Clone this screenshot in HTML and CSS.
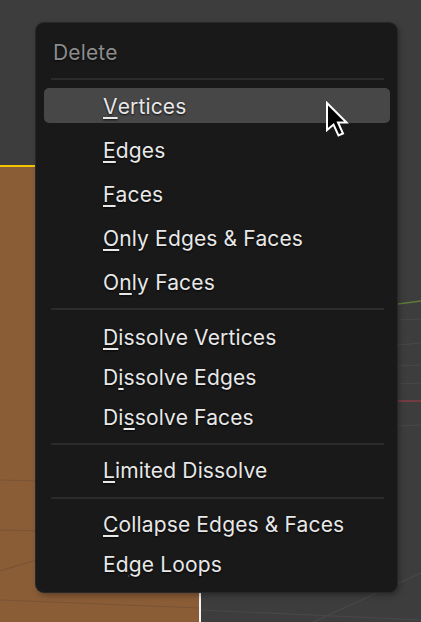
FILE: index.html
```html
<!DOCTYPE html>
<html>
<head>
<meta charset="utf-8">
<link rel="stylesheet" href="styles.css">
</head>
<body>
<div class="viewport">
  <svg class="scene" width="421" height="622" viewBox="0 0 421 622">
    <rect x="0" y="0" width="421" height="622" fill="#3d3d3d"/>
    <rect x="0" y="167" width="200" height="455" fill="#8a5d37"/>
    <rect x="0" y="165" width="40" height="2" fill="#f2c700"/>
    <g stroke="#7a5434" stroke-width="1.2" fill="none">
      <line x1="0" y1="480" x2="40" y2="481"/>
      <line x1="0" y1="530" x2="40" y2="531"/>
      <line x1="0" y1="571" x2="40" y2="559"/>
      <line x1="0" y1="600" x2="200" y2="608"/>
    </g>
    <g stroke="#484848" stroke-width="1.2" fill="none">
      <line x1="201" y1="610" x2="421" y2="620"/>
      <line x1="313" y1="622" x2="421" y2="573"/>
      <line x1="398" y1="320" x2="421" y2="319"/>
      <line x1="398" y1="345" x2="421" y2="343"/>
      <line x1="398" y1="366" x2="421" y2="365"/>
      <line x1="398" y1="384" x2="421" y2="383"/>
      <line x1="398" y1="426" x2="421" y2="425"/>
    </g>
    <line x1="398" y1="304" x2="421" y2="301" stroke="#5d7a3a" stroke-width="1.5"/>
    <line x1="398" y1="401" x2="421" y2="401" stroke="#8a3a45" stroke-width="1.5"/>
    <rect x="199" y="585" width="2" height="37" fill="#f4f4f4"/>
  </svg>

  <div class="menu">
    <div class="title">Delete</div>
    <div class="sep sep-a"></div>
    <div class="group group-wide">
      <div class="item active"><span class="k">V</span>ertices</div>
      <div class="item"><span class="k">E</span>dges</div>
      <div class="item"><span class="k">F</span>aces</div>
      <div class="item"><span class="k">O</span>nly Edges &amp; Faces</div>
      <div class="item">O<span class="k">n</span>ly Faces</div>
    </div>
    <div class="sep sep-b"></div>
    <div class="group">
      <div class="item"><span class="k">D</span>issolve Vertices</div>
      <div class="item">D<span class="k">i</span>ssolve Edges</div>
      <div class="item">Di<span class="k">s</span>solve Faces</div>
    </div>
    <div class="sep sep-c"></div>
    <div class="group">
      <div class="item"><span class="k">L</span>imited Dissolve</div>
    </div>
    <div class="sep sep-d"></div>
    <div class="group">
      <div class="item"><span class="k">C</span>ollapse Edges &amp; Faces</div>
      <div class="item">Ed<span class="k">g</span>e Loops</div>
    </div>
  </div>

  <svg class="cursor" width="26" height="38" viewBox="0 0 26 38">
    <path d="M2 2 L2 29 L8.5 23.5 L13.5 34.5 L18 32.5 L13 21.5 L21.5 21.5 Z" fill="#000" stroke="#fff" stroke-width="2" stroke-linejoin="miter"/>
  </svg>
</div>
</body>
</html>
```

FILE: styles.css
```css
html, body {
  margin: 0;
  padding: 0;
  width: 421px;
  height: 622px;
  overflow: hidden;
  background: #3d3d3d;
}

.viewport {
  position: relative;
  width: 421px;
  height: 622px;
  font-family: Inter, "Noto Sans", sans-serif;
}

.scene {
  position: absolute;
  left: 0;
  top: 0;
  display: block;
}

.menu {
  position: absolute;
  left: 36px;
  top: 23px;
  width: 361px;
  height: 569px;
  box-sizing: border-box;
  padding: 7px 7px 0 8px;
  background: #191919;
  border-radius: 8px;
  box-shadow: 0 0 0 1px #272727, 2px 3px 6px rgba(0, 0, 0, 0.35);
  display: flex;
  flex-direction: column;
}

.title {
  height: 44px;
  display: flex;
  align-items: center;
  padding-left: 9px;
  font-size: 21px;
  letter-spacing: 0.15px;
  color: #8c8c8c;
  text-shadow: 0 1px 2px rgba(0, 0, 0, 0.7);
}

.sep {
  height: 2px;
  flex: none;
  background: #2b2b2b;
  margin: 0 6px 0 7px;
}
.sep-a { margin-top: 4px; margin-bottom: 4px; }
.sep-b { margin-top: 4px; margin-bottom: 7px; }
.sep-c { margin-top: 6px; margin-bottom: 5px; }
.sep-d { margin-top: 7px; margin-bottom: 5px; }

.group {
  display: flex;
  flex-direction: column;
}

.item {
  height: 40px;
  flex: none;
  display: flex;
  align-items: center;
  padding-left: 59px;
  font-size: 21px;
  letter-spacing: 0.15px;
  color: #e8e8e8;
  text-shadow: 0 1px 2px rgba(0, 0, 0, 0.85);
  position: relative;
  white-space: nowrap;
}

.group-wide .item {
  height: 44px;
}

.item.active::before {
  content: "";
  position: absolute;
  left: 0;
  right: 0;
  top: 4px;
  bottom: 5px;
  background: #474747;
  border-radius: 5px;
  z-index: -1;
}

.item.active {
  z-index: 0;
}

.k {
  text-decoration: underline;
  text-decoration-thickness: 2px;
  text-underline-offset: 3px;
}

.cursor {
  position: absolute;
  left: 325px;
  top: 101px;
}
```
